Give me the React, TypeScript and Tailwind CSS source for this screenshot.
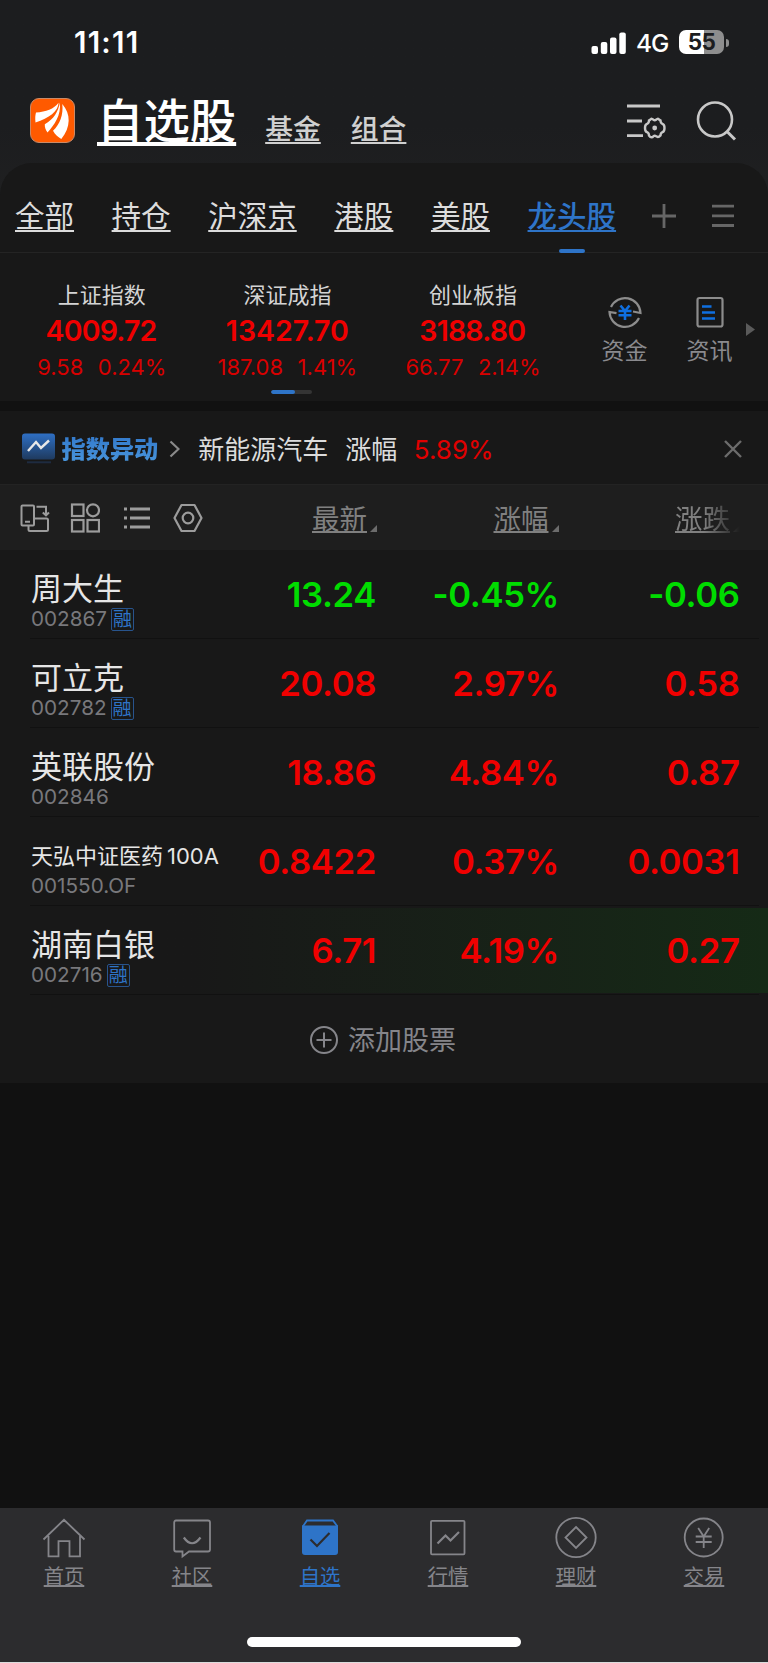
import type { ReactNode } from "react";
import clsx from "clsx";

type IndexQuote = {
  name: string;
  price: string;
  change: string;
  percent: string;
  tight?: boolean;
};

type Stock = {
  name: string;
  suffix?: string;
  code: string;
  margin?: boolean;
  price: string;
  percent: string;
  change: string;
  down?: boolean;
  flash?: boolean;
};

const tabs = ["全部", "持仓", "沪深京", "港股", "美股", "龙头股"];

const indexes: IndexQuote[] = [
  { name: "上证指数", price: "4009.72", change: "9.58", percent: "0.24%", tight: true },
  { name: "深证成指", price: "13427.70", change: "187.08", percent: "1.41%" },
  { name: "创业板指", price: "3188.80", change: "66.77", percent: "2.14%", tight: true },
];

const stocks: Stock[] = [
  { name: "周大生", code: "002867", margin: true, price: "13.24", percent: "-0.45%", change: "-0.06", down: true },
  { name: "可立克", code: "002782", margin: true, price: "20.08", percent: "2.97%", change: "0.58" },
  { name: "英联股份", code: "002846", price: "18.86", percent: "4.84%", change: "0.87" },
  { name: "天弘中证医药", suffix: "100A", code: "001550.OF", price: "0.8422", percent: "0.37%", change: "0.0031" },
  { name: "湖南白银", code: "002716", margin: true, price: "6.71", percent: "4.19%", change: "0.27", flash: true },
];

function StatusBar() {
  return (
    <div className="flex h-[86px] items-center pl-[74px] pr-[39px] text-white">
      <span className="-mt-px text-[29.5px] font-semibold leading-none tracking-[1.2px]">11:11</span>
      <svg className="ml-auto" width="36" height="24" viewBox="0 0 36 24" fill="currentColor">
        <rect x="0.5" y="15" width="6.5" height="8" rx="2" />
        <rect x="9.8" y="11" width="6.5" height="12" rx="2" />
        <rect x="19" y="6.5" width="6.5" height="16.5" rx="2" />
        <rect x="28.3" y="1.5" width="6.5" height="21.5" rx="2" />
      </svg>
      <span className="ml-[9px] mt-px w-[34px] text-[24.5px] font-medium leading-none tracking-[-1px]">4G</span>
      <div className="ml-[9px] mt-[-2px] flex h-6 w-[45px] items-center justify-center rounded-[7px] bg-linear-to-r from-white from-[55%] to-[#8e8e8e] to-[55%] text-[22.5px] font-bold leading-none tracking-[-0.6px] text-[#1c1d1f]">
        55
      </div>
      <div className="ml-[2px] h-2 w-[3px] rounded-r-full bg-[#8e8e8e]" />
    </div>
  );
}

function Header() {
  return (
    <header className="flex h-[77px] pl-[30px] pr-[31px]">
      <svg className="mt-3" width="45" height="45" viewBox="0 0 45 45">
        <rect x="0.5" y="0.5" width="44" height="44" rx="8.5" fill="#ff5a00" stroke="#c98a68" />
        <g fill="#fff">
          <path d="M5.5 24.5C5 20 5.3 17 6 14.5C16 14 24 11 28.5 4.8C28.5 13 19 20.5 5.5 24.5Z" />
          <path d="M29.8 4.5C31.5 17 24 27.5 17.5 34.5C15.6 31.5 14.6 29.5 14.8 26.2C23.5 21.5 28.5 13.5 29.8 4.5Z" />
          <path d="M32.3 6C41 16 41 29 31.3 41C28.5 39.5 25 36.5 23 32.8C30 26 33.5 17 32.3 6Z" />
        </g>
      </svg>
      <h1 className="ml-[22px] mt-[5px] text-[46.4px] font-medium leading-[60px] text-white underline decoration-[4px] underline-offset-[4px]">
        自选股
      </h1>
      <span className="ml-[29px] mt-[23px] text-[27.8px] font-medium leading-10 text-[#d0d0d0] underline decoration-2 underline-offset-[3px]">
        基金
      </span>
      <span className="ml-[30px] mt-[23px] text-[27.8px] font-medium leading-10 text-[#d0d0d0] underline decoration-2 underline-offset-[3px]">
        组合
      </span>
      <svg className="ml-auto mt-4" width="40" height="38" viewBox="0 0 40 38" fill="none" stroke="#c8c8c8" strokeWidth="2.8">
        <path d="M1 4H34M1 19H16M1 33.6H17" />
        <path
          d="M24.5 17.5Q26 16 27.5 17.8Q28.7 18.8 30 17.8Q31.5 16 33 17.5L34.5 18.5Q34.5 21 36.5 21.8Q38.5 22.5 38.5 26Q38.5 29.5 36.5 30.2Q34.5 31 34.5 33.5L33 34.7Q31.5 35.5 30 34.2Q28.7 33.2 27.5 34.2Q26 36 24 34.7L23 33.5Q23 31 21 30.2Q19 29.5 19 26Q19 22.5 21 21.8Q23 21 23 18.5Z"
          strokeWidth="2.4"
        />
        <circle cx="28.7" cy="26" r="2.4" fill="#c8c8c8" stroke="none" />
      </svg>
      <svg className="ml-[29px] mt-[14px]" width="42" height="42" viewBox="0 0 42 42" fill="none" stroke="#c8c8c8" strokeWidth="2.6">
        <circle cx="20" cy="19.5" r="17" />
        <path d="M32 31.5L40 39.5" strokeWidth="3" />
      </svg>
    </header>
  );
}

function GroupTabs() {
  return (
    <div className="flex h-[90px] border-b border-[#242424] pl-[15px] pr-[33px] text-[29.5px] leading-[40px] text-[#dcdcdc]">
      <ul className="flex gap-[37.6px] pt-[33px]">
        {tabs.map((tab, i) => {
          const active = i === tabs.length - 1;
          return (
            <li key={tab} className={clsx("relative h-[57px]", active && "font-medium text-[#2e74c8]")}>
              <span className="underline decoration-2 underline-offset-[3px]">{tab}</span>
              {active && (
                <span className="absolute bottom-0 left-1/2 h-1 w-[26px] -translate-x-1/2 rounded-sm bg-[#2e74c8]" />
              )}
            </li>
          );
        })}
      </ul>
      <svg className="ml-auto mt-10" width="26" height="26" viewBox="0 0 26 26" stroke="#666" strokeWidth="2.8">
        <path d="M13 1V25M1 13H25" />
      </svg>
      <svg className="ml-[34px] mt-10" width="24" height="26" viewBox="0 0 24 26" stroke="#666" strokeWidth="2.8">
        <path d="M1 3.2H23M1 12.8H23M1 22.5H23" />
      </svg>
    </div>
  );
}

function IndexStrip() {
  return (
    <section className="flex h-[148px] pl-[9px]">
      <div className="w-[557px]">
        <div className="flex pt-[25px]">
          {indexes.map((item) => (
            <div key={item.name} className="flex w-[185.6px] flex-col items-center whitespace-nowrap">
              <span className="h-[34px] text-[22px] leading-[34px] text-[#d4d4d4]">{item.name}</span>
              <span
                className={clsx(
                  "h-[38px] text-[28.5px] font-semibold leading-[38px] text-[#f00000]",
                  item.tight && "pr-[1.5px] tracking-[-0.8px]"
                )}
              >
                {item.price}
              </span>
              <span className="flex h-[34px] gap-[14.5px] text-[22px] leading-[34px] text-[#d80000]">
                <span>{item.change}</span>
                <span>{item.percent}</span>
              </span>
            </div>
          ))}
        </div>
        <div className="ml-[262px] mt-[6px] h-1 w-[41px] overflow-hidden rounded-full bg-[#343434]">
          <div className="h-1 w-6 rounded-full bg-[#2e74c8]" />
        </div>
      </div>
      <div className="ml-[16.5px] flex w-[84px] flex-col items-center pt-[42px] text-[23px] text-[#8a8a8e]">
        <svg width="34" height="34" viewBox="0 0 34 34" fill="none" stroke="#8c8c8c" strokeWidth="2.2">
          <path d="M3 12A15.5 15.5 0 0 1 32.5 18L25 16.5M31 23A15.5 15.5 0 0 1 1.5 17L8.5 18.2" />
          <path d="M12.5 10.5L17 16L21.5 10.5M17 16V25M10.5 16H23.5M10.5 20.3H23.5" stroke="#0f6fe0" strokeWidth="2.6" />
        </svg>
        <span className="mt-[5px] leading-[34px]">资金</span>
      </div>
      <div className="flex w-[86px] flex-col items-center pt-[42px] text-[23px] text-[#8a8a8e]">
        <svg width="34" height="34" viewBox="0 0 34 34" fill="none" stroke="#8c8c8c" strokeWidth="2.2">
          <rect x="4.5" y="3" width="25" height="28.5" rx="2" />
          <path d="M9 11.5H18.5M9 17.5H22M9 23.5H22" stroke="#0f6fe0" strokeWidth="2.6" />
        </svg>
        <span className="mt-[5px] leading-[34px]">资讯</span>
      </div>
      <svg className="-ml-[7px] mt-[70px]" width="9" height="13" viewBox="0 0 9 13" fill="#5a5a5a">
        <path d="M0 0L9 6.5L0 13Z" />
      </svg>
    </section>
  );
}

function AlertBar() {
  return (
    <div className="flex h-[73px] items-center pl-[22px] pr-[26px] pt-[2px] text-[26px] leading-10 text-[#dcdcdc]">
      <svg width="33" height="32" viewBox="0 0 33 32" fill="none">
        <defs>
          <linearGradient id="alert" x1="0" y1="0" x2="0" y2="1">
            <stop offset="0" stopColor="#2e6fc4" />
            <stop offset="1" stopColor="#1f3a5e" />
          </linearGradient>
        </defs>
        <rect y="0.5" width="33" height="26" rx="3" fill="url(#alert)" />
        <path d="M6 18L14 9L19 15L27 7.5" stroke="#e8e8e8" strokeWidth="2.4" />
        <path d="M5 29.3H29" stroke="#1e2b40" strokeWidth="2" />
      </svg>
      <span className="ml-[6.5px] mt-[2px] bg-linear-to-b from-[#2f74c8] to-[#4f9de0] bg-clip-text text-[24.2px] font-extrabold text-transparent">
        指数异动
      </span>
      <svg className="ml-[11px]" width="11" height="18" viewBox="0 0 11 18" fill="none" stroke="#8a8a8a" strokeWidth="2.2">
        <path d="M1.5 1.5L9.5 9L1.5 16.5" />
      </svg>
      <span className="ml-[18px] mt-[3px]">新能源汽车</span>
      <span className="ml-[17px] mt-[3px]">涨幅</span>
      <span className="ml-[16.5px] mt-[2px] text-[#e00000]">5.89%</span>
      <svg className="ml-auto" width="18" height="18" viewBox="0 0 18 18" stroke="#6c6c6c" strokeWidth="2.4">
        <path d="M1 1L17 17M17 1L1 17" />
      </svg>
    </div>
  );
}

function SortLabel({ children }: { children: string }) {
  return (
    <span className="flex items-end justify-end pt-[2px] text-[27.5px] leading-10 text-[#808080]">
      <span className="underline decoration-2 underline-offset-2">{children}</span>
      <svg className="mb-[7px] ml-[3px]" width="7" height="7" viewBox="0 0 7 7" fill="#6c6c6c">
        <path d="M7 0V7H0Z" />
      </svg>
    </span>
  );
}

function TableHead() {
  return (
    <div className="flex h-[66px] items-center border-t border-[#232323] bg-[#1e1e1e] pl-[19.5px]">
      <div className="flex w-[184.5px] items-center text-[#9c9c9c]">
        <svg width="30" height="30" viewBox="0 0 30 30" fill="none" stroke="currentColor" strokeWidth="2">
          <rect x="1.5" y="2.5" width="12.5" height="20" rx="1" />
          <path d="M5 18.8H10M8.5 23V26.5Q8.5 28 10 28H26.5Q28 28 28 26.5V17Q28 15.5 26.5 15.5H14.5M16.5 3.8H26V12M22.8 9.5L26 12.3L29 9.5" />
        </svg>
        <svg className="ml-[20.7px]" width="30" height="30" viewBox="0 0 30 30" fill="none" stroke="currentColor" strokeWidth="2.2">
          <rect x="2" y="1.5" width="11.5" height="11.5" />
          <circle cx="23" cy="7.3" r="6" />
          <rect x="2" y="17" width="11.5" height="11.5" />
          <rect x="17.5" y="17" width="11.5" height="11.5" />
        </svg>
        <svg className="ml-[22.8px]" width="28" height="30" viewBox="0 0 28 30" fill="none" stroke="currentColor" strokeWidth="3">
          <path d="M7 6H27M7 15H27M7 24H27M1 6H4M1 15H4M1 24H4" />
        </svg>
        <svg className="ml-[22.5px]" width="30" height="30" viewBox="0 0 30 30" fill="none" stroke="currentColor" strokeWidth="2.2">
          <path d="M8.5 2H21.5L28.5 15L21.5 28H8.5L1.5 15Z" strokeLinejoin="round" />
          <circle cx="15" cy="15" r="5.3" />
        </svg>
      </div>
      <div className="w-[173px]">
        <SortLabel>最新</SortLabel>
      </div>
      <div className="w-[181.5px]">
        <SortLabel>涨幅</SortLabel>
      </div>
      <div className="w-[181.5px] mask-r-from-[80%] mask-r-to-100%">
        <SortLabel>涨跌</SortLabel>
      </div>
    </div>
  );
}

function StockRow({ stock }: { stock: Stock }) {
  return (
    <li className="h-[89px]">
      <div
        className={clsx(
          "flex h-[88px] border-b border-t-2 border-transparent bg-clip-padding pl-[31px] text-[34.7px] font-semibold leading-[85px] tracking-[-0.4px]",
          stock.down ? "text-[#00dc00]" : "text-[#f00000]",
          stock.flash && "bg-linear-to-r from-[#181818] from-25% to-[#152a16]"
        )}
      >
        <div className="w-[199px] pt-[17px] font-normal tracking-normal">
          <div
            className={clsx(
              "flex h-10 items-center gap-1 whitespace-nowrap leading-10 text-[#e6e6e6]",
              stock.suffix ? "text-[22px]" : "text-[31px]"
            )}
          >
            {stock.name}
            {stock.suffix && <span>{stock.suffix}</span>}
          </div>
          <div className="-mt-px flex h-[23px] items-center text-[20.7px] leading-none text-[#78787c]">
            {stock.code}
            {stock.margin && (
              <span className="ml-1 flex size-[23px] items-center justify-center rounded-[2px] border border-[#28548c] text-[19px] leading-none text-[#2e74c8]">
                融
              </span>
            )}
          </div>
        </div>
        <span className="w-[146px] text-right">{stock.price}</span>
        <span className="w-[183px] text-right">{stock.percent}</span>
        <span className="w-[180.5px] text-right">{stock.change}</span>
      </div>
      <div className="ml-[30px] mr-[9px] h-px bg-[#111]" />
    </li>
  );
}

function NavItem({ label, active, children }: { label: string; active?: boolean; children: ReactNode }) {
  return (
    <li
      className={clsx(
        "flex w-32 flex-col items-center pt-2 text-[20.3px]",
        active ? "text-[#2e74c8]" : "text-[#85858a]"
      )}
    >
      <svg width="44" height="44" viewBox="0 0 44 44" fill="none" stroke="currentColor" strokeWidth="1.8">
        {children}
      </svg>
      <span className="mt-[2px] leading-[30px] underline decoration-[1.5px] underline-offset-1">{label}</span>
    </li>
  );
}

function BottomNav() {
  return (
    <nav className="h-[155px] border-b border-[#dcdcdc] bg-[#2c2c2e]">
      <ul className="flex h-[129px]">
        <NavItem label="首页">
          <path d="M1.5 23.5L22 3.8L42.5 23.5M6.5 20V40.3H16.5V25.2H27.5V40.3H38V20" />
        </NavItem>
        <NavItem label="社区">
          <path d="M6 4.5H38Q40 4.5 40 6.5V33.5Q40 35.5 38 35.5H19L12.5 40.5V35.5H6Q4.2 35.5 4.2 33.5V6.5Q4.2 4.5 6 4.5Z" />
          <path d="M13.8 21.5Q22 33 30.5 21.5" strokeWidth="2.2" />
        </NavItem>
        <NavItem label="自选" active>
          <path d="M4.8 10.5L9 4.5H35L39.5 10.5" />
          <path d="M4 9.5H40V36Q40 39 37 39H7Q4 39 4 36Z" fill="currentColor" stroke="none" />
          <path d="M12.5 23.5L19 30L31.5 17" stroke="#2c2c2e" strokeWidth="2.2" />
        </NavItem>
        <NavItem label="行情">
          <rect x="5" y="4.8" width="33.5" height="33.5" rx="1" />
          <path d="M11.5 27.5L19.5 19.5L24.5 24.5L33 16" strokeWidth="2.2" />
        </NavItem>
        <NavItem label="理财">
          <circle cx="22" cy="21.5" r="19.7" />
          <path d="M22 11L32.5 21.5L22 32L11.5 21.5Z" />
        </NavItem>
        <NavItem label="交易">
          <circle cx="21.7" cy="21.5" r="19" />
          <path d="M16.2 12L21.7 20.5L27.2 12M21.7 20V32M13.7 20.5H29.7M13.7 26H29.7" />
        </NavItem>
      </ul>
      <div className="mx-auto h-[10px] w-[274px] rounded-full bg-white" />
    </nav>
  );
}

export default function App() {
  return (
    <div className="flex h-[1663px] w-[768px] flex-col overflow-hidden bg-[#111] font-['Inter','Noto_Sans_CJK_SC',sans-serif]">
      <div className="bg-linear-to-b from-[#1c1d1f] from-50% to-[#222]">
        <StatusBar />
        <Header />
        <div className="rounded-t-[32px] bg-[#181818]">
          <GroupTabs />
        </div>
      </div>
      <div className="bg-[#181818]">
        <IndexStrip />
      </div>
      <div className="mt-[10px] bg-[#181818]">
        <AlertBar />
        <TableHead />
        <ul>
          {stocks.map((stock) => (
            <StockRow key={stock.code} stock={stock} />
          ))}
        </ul>
        <button className="flex h-[88px] w-full items-center justify-center gap-[9px] pr-[3px] pt-[2px] text-[27px] text-[#85858a]">
          <svg width="30" height="30" viewBox="0 0 30 30" fill="none" stroke="currentColor" strokeWidth="2">
            <circle cx="15" cy="15" r="13" />
            <path d="M15 7.5V22.5M7.5 15H22.5" />
          </svg>
          <span className="mt-[3px]">添加股票</span>
        </button>
      </div>
      <div className="flex-1" />
      <BottomNav />
    </div>
  );
}
